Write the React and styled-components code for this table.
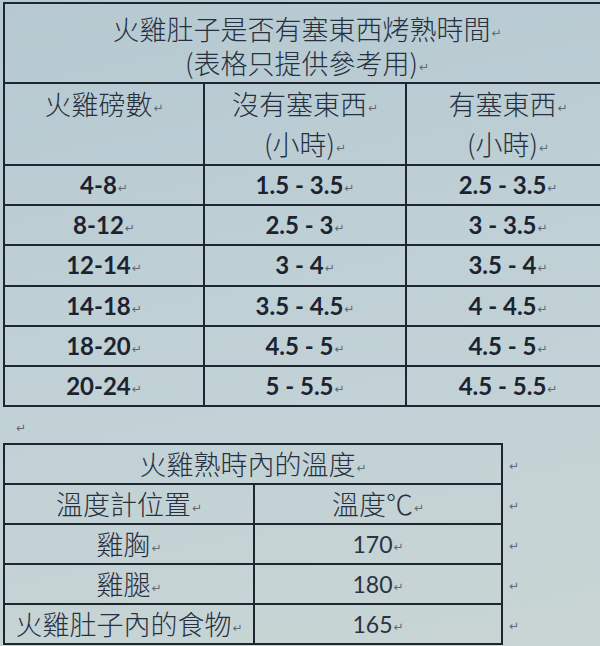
import styled, { createGlobalStyle } from "styled-components";

const GlobalStyle = createGlobalStyle`
  html, body {
    margin: 0;
    padding: 0;
  }
  body {
    width: 600px;
    height: 646px;
    overflow: hidden;
    background: linear-gradient(168deg, #b6c9d0 0%, #bfd0d6 45%, #c9d5d4 100%);
    font-family: "Noto Sans CJK TC", "Noto Sans", sans-serif;
    color: #263041;
  }
`;

const Page = styled.div`
  width: 600px;
  height: 646px;
  box-sizing: border-box;
  padding: 2px 0 0 3px;
  overflow: hidden;
`;

const Table = styled.table`
  border-collapse: collapse;
  table-layout: fixed;
  width: ${(p) => p.$w}px;
`;

const Cell = styled.td`
  border: 2px solid #1e2731;
  padding: 0;
  text-align: center;
  vertical-align: ${(p) => p.$valign || "middle"};
  height: ${(p) => p.$h}px;
  font-size: 27px;
  line-height: ${(p) => p.$lh || 40}px;
  font-weight: 300;
  white-space: nowrap;
  overflow: visible;
`;

const TitleCell = styled(Cell)`
  padding-top: 8px;
  box-sizing: border-box;
`;

const NumCell = styled(Cell)`
  font-family: Lato, "Open Sans", sans-serif;
  font-weight: ${(p) => (p.$bold ? 700 : 400)};
  font-size: ${(p) => (p.$bold ? 24 : 23)}px;
  line-height: 30px;
  color: ${(p) => (p.$bold ? "#1c2330" : "#2a3342")};
`;

const MarkCell = styled.td`
  border: none;
  padding: 0 0 0 5px;
  text-align: left;
  vertical-align: middle;
  line-height: 1;
`;

const Mark = styled.span`
  font-family: "DejaVu Sans", sans-serif;
  font-size: 12px;
  font-weight: 400;
  line-height: 1;
  color: #5f6a76;
  margin-left: 1px;
  vertical-align: middle;
`;

const EmptyPara = styled.div`
  height: 36px;
  display: flex;
  align-items: center;
  padding: 6px 0 0 12px;
  box-sizing: border-box;
  line-height: 1;
`;

const weights = [
  ["4-8", "1.5 - 3.5", "2.5 - 3.5"],
  ["8-12", "2.5 - 3", "3 - 3.5"],
  ["12-14", "3 - 4", "3.5 - 4"],
  ["14-18", "3.5 - 4.5", "4 - 4.5"],
  ["18-20", "4.5 - 5", "4.5 - 5"],
  ["20-24", "5 - 5.5", "4.5 - 5.5"],
];

const temps = [
  ["雞胸", "170"],
  ["雞腿", "180"],
  ["火雞肚子內的食物", "165"],
];

const M = () => <Mark>↵</Mark>;

export default function App() {
  return (
    <>
      <GlobalStyle />
      <Page>
        <Table $w={606}>
          <colgroup>
            <col style={{ width: 200 }} />
            <col style={{ width: 202 }} />
            <col style={{ width: 204 }} />
          </colgroup>
          <tbody>
            <tr>
              <TitleCell colSpan={3} $h={80} $lh={34} $valign="top">
                火雞肚子是否有塞東西烤熟時間<M />
                <br />
                (表格只提供參考用)<M />
              </TitleCell>
            </tr>
            <tr>
              <Cell $h={78} $valign="top">
                火雞磅數<M />
              </Cell>
              <Cell $h={78} $valign="top">
                沒有塞東西<M />
                <br />
                (小時)<M />
              </Cell>
              <Cell $h={78} $valign="top">
                有塞東西<M />
                <br />
                (小時)<M />
              </Cell>
            </tr>
            {weights.map((row, i) => (
              <tr key={i}>
                {row.map((v, j) => (
                  <NumCell key={j} $h={38.2} $bold>
                    {v}
                    <M />
                  </NumCell>
                ))}
              </tr>
            ))}
          </tbody>
        </Table>

        <EmptyPara>
          <Mark>↵</Mark>
        </EmptyPara>

        <Table $w={538}>
          <colgroup>
            <col style={{ width: 250 }} />
            <col style={{ width: 248 }} />
            <col style={{ width: 40 }} />
          </colgroup>
          <tbody>
            <tr>
              <Cell colSpan={2} $h={38} $lh={30}>
                火雞熟時內的溫度<M />
              </Cell>
              <MarkCell>
                <M />
              </MarkCell>
            </tr>
            <tr>
              <Cell $h={38} $lh={30}>
                溫度計位置<M />
              </Cell>
              <Cell $h={38} $lh={30}>
                溫度℃<M />
              </Cell>
              <MarkCell>
                <M />
              </MarkCell>
            </tr>
            {temps.map(([place, deg]) => (
              <tr key={place}>
                <Cell $h={38} $lh={30}>
                  {place}
                  <M />
                </Cell>
                <NumCell $h={38}>
                  {deg}
                  <M />
                </NumCell>
                <MarkCell>
                  <M />
                </MarkCell>
              </tr>
            ))}
          </tbody>
        </Table>
      </Page>
    </>
  );
}
